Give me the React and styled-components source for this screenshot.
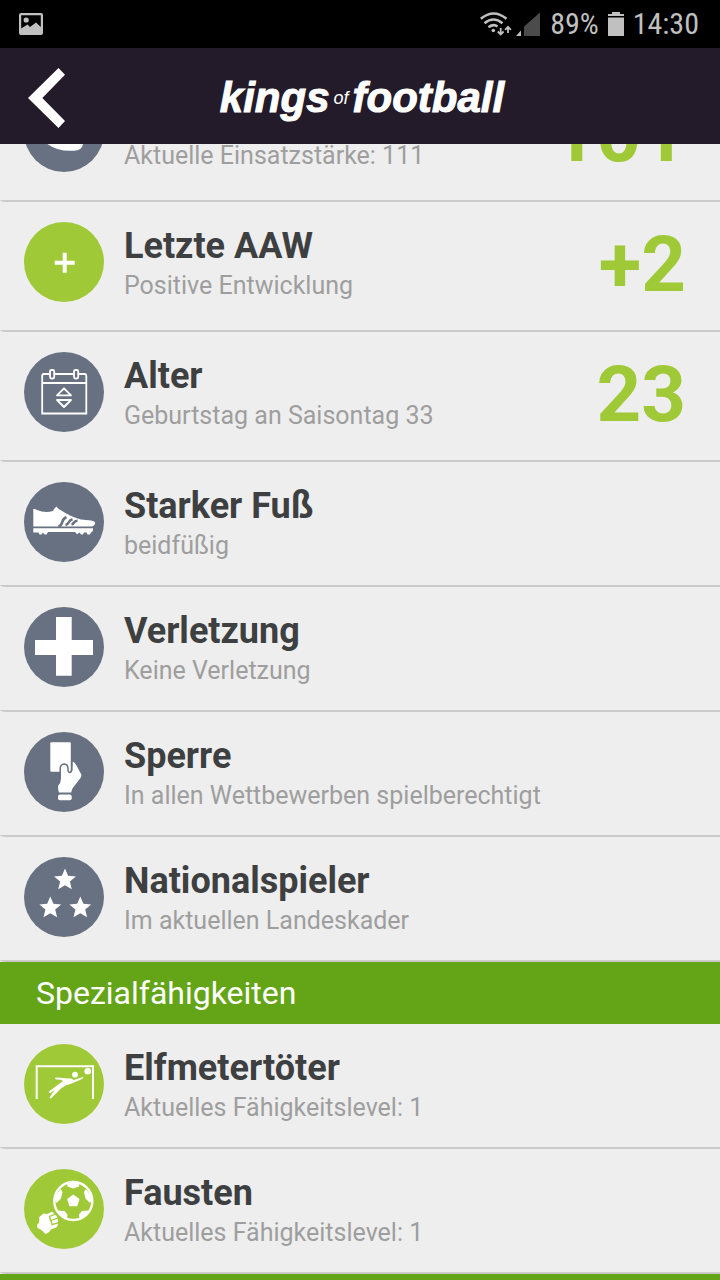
import React, { useLayoutEffect, useRef } from "react";
import styled, { createGlobalStyle } from "styled-components";

const lime = "#a0c938";
const slate = "#687182";

const GlobalStyle = createGlobalStyle`
  *, *::before, *::after { box-sizing: border-box; }
  html, body, #root { height: 100%; }
  body {
    margin: 0;
    background: #eeeeee;
    font-family: Roboto, "Liberation Sans", sans-serif;
  }
  svg { display: block; flex: none; }
`;

const Screen = styled.div`
  display: flex;
  flex-direction: column;
  height: 100%;
  overflow: hidden;
`;

const StatusBar = styled.div`
  display: flex;
  align-items: center;
  flex: none;
  height: 48px;
  padding: 0 21px 0 19px;
  background: #000000;
  color: #c0c0c0;
  font-family: "Roboto Condensed", Roboto, sans-serif;
  font-size: 30px;
  line-height: 50px;
`;

const StatusGroup = styled.div`
  display: flex;
  align-items: center;
  gap: 9px;
  margin-left: auto;
`;

const TopBar = styled.header`
  display: grid;
  grid-template-columns: 96px 1fr 96px;
  align-items: center;
  flex: none;
  height: 96px;
  background: #231b29;
`;

const BackButton = styled.button`
  display: flex;
  align-items: center;
  height: 96px;
  padding: 4px 0 0 28px;
  border: 0;
  background: none;
`;

const Logo = styled.h1`
  display: flex;
  justify-content: center;
  align-items: center;
  gap: 4px;
  margin: 0;
  padding: 4px 0 0 4px;
  color: #ffffff;
  font: italic bold 42px/48px "Liberation Sans", sans-serif;
  -webkit-text-stroke: 1px #ffffff;

  small {
    font-size: 18px;
    font-weight: 400;
    line-height: 48px;
    -webkit-text-stroke: 0;
  }
`;

const Scroller = styled.main`
  flex: 1;
  min-height: 0;
  overflow-y: auto;
  scrollbar-width: none;
`;

const List = styled.ul`
  margin: 0;
  padding: 0;
  list-style: none;
`;

const Row = styled.li`
  display: flex;
  align-items: flex-start;
  gap: 20px;
  height: ${({ $tall }) => ($tall ? 130 : 125)}px;
  padding: 20px 34px 0 24px;
  border-bottom: 2px solid #cacaca;
  border-bottom-left-radius: 8px 2px;
`;

const RowText = styled.div`
  flex: 1;
  min-width: 0;
`;

const RowTitle = styled.h2`
  min-height: 48px;
  margin: 0;
  color: #3d3f41;
  font-size: 36px;
  font-weight: 700;
  line-height: 48px;
`;

const RowNote = styled.p`
  margin: 0;
  color: #9e9e9e;
  font-size: 25px;
  font-weight: 400;
  line-height: 32px;
  white-space: nowrap;
`;

const RowValue = styled.strong`
  color: ${lime};
  font-size: 78px;
  font-weight: 700;
  line-height: 86px;
`;

const SectionBar = styled.h2`
  height: 62px;
  margin: 0;
  padding: 0 36px;
  background: #63a516;
  color: #ffffff;
  font-size: 32px;
  font-weight: 400;
  line-height: 62px;
`;

function Badge({ color = slate, children }) {
  return (
    <svg width="80" height="80" viewBox="0 0 80 80" fill="#fff" aria-hidden="true">
      <circle cx="40" cy="40" r="40" fill={color} />
      {children}
    </svg>
  );
}

const star = (cx, cy, outer, inner) =>
  Array.from({ length: 10 }, (_, i) => {
    const r = i % 2 ? inner : outer;
    const a = (i * Math.PI) / 5 - Math.PI / 2;
    return `${(cx + r * Math.cos(a)).toFixed(1)},${(cy + r * Math.sin(a)).toFixed(1)}`;
  }).join(" ");

const StrengthIcon = () => (
  <Badge>
    <path d="M20 30 Q30 18 44 30 Q60 34 59 52 Q58 58.500 50 58.700 Q32 60 21 50 Z" />
  </Badge>
);

const PlusIcon = () => (
  <Badge color={lime}>
    <path d="M38.700 30.700h4v8h8v4h-8v8h-4v-8h-8v-4h8z" />
  </Badge>
);

const CalendarIcon = () => (
  <Badge>
    <g fill="none" stroke="#fff" strokeWidth="1.800">
      <path d="M25.500 22H20Q18.200 22 18.200 24V61.500H62.300V24Q62.300 22 60.500 22H54.500M30.500 22H49.500M18.200 31H62.300" />
      <rect x="26" y="18" width="4.200" height="8.500" rx="1.500" />
      <rect x="50" y="18" width="4.200" height="8.500" rx="1.500" />
      <path d="M33 43.300L40 36.300L47 43.300ZM33 48L40 55L47 48Z" strokeLinejoin="round" />
    </g>
  </Badge>
);

const BootIcon = () => (
  <Badge>
    <path d="M9.300 27Q11 26.500 13 28Q21 31.500 29 29Q30.500 26 32.500 24.500Q34 27 36.500 28Q46 34.500 57 37.500L67 38.500Q72 39.500 71 42Q70 44.500 66 44.600H9.300Z" />
    <path d="M9.300 46.300H69Q69.500 50 67 50.300L66 52.500H63.500L62.500 50.500H60L59 52.500H57L55.500 50.500L53 52.300L51 50H24L22.500 52.500H20.500L19 50.500L17.500 52.500H15.500L14.500 50.500H9.300Z" />
    <path d="M34.500 44.600Q37.500 43.500 38.500 39.500Q39.300 36.300 42.500 35.300M41.500 43Q43.700 42.500 45 40Q46 37.800 48.500 37.200M47.500 42.500Q49.200 42 50.300 40.300Q51.500 38.800 53.500 38.800" fill="none" stroke={slate} strokeWidth="2.600" />
  </Badge>
);

const CrossIcon = () => (
  <Badge>
    <path d="M32 10h15.700v23H69v15H47.700v20.700H32V48H11V33h21z" />
  </Badge>
);

const CardIcon = () => (
  <Badge>
    <rect x="26.300" y="10.300" width="20.500" height="29.400" rx="1" />
    <path d="M48.700 29.500Q51 30.500 52.500 33.500L57.300 42.500Q57.500 44.500 56.500 46L49.500 55Q47.500 57 47.200 60.500H35Q33.500 56 34.200 53.500Q37.500 50 36.700 46V36Q37 32.800 40.200 32.300Q43.500 32.500 43.800 36V39Q44.500 41 46.500 40.800Q48.500 40 48.300 37.500Z" />
    <path d="M36.200 47V36Q36.500 32.300 40.200 31.900Q43.700 32.200 44 36V38.500Q44.300 40.600 46.200 40.400Q47.800 39.800 47.700 37.500V29" fill="none" stroke={slate} strokeWidth="1.500" />
    <rect x="34" y="62.500" width="13.700" height="5.800" rx="2" />
  </Badge>
);

const StarsIcon = () => (
  <Badge>
    <polygon points={star(41, 23, 11.5, 5.2)} />
    <polygon points={star(26.3, 51, 11.5, 5.2)} />
    <polygon points={star(56.3, 51, 11.5, 5.2)} />
  </Badge>
);

const SaveIcon = () => (
  <Badge color={lime}>
    <path d="M12.700 55V22.300H69V55" fill="none" stroke="#fff" strokeWidth="2" />
    <circle cx="63.700" cy="27.200" r="3.300" />
    <circle cx="51" cy="30.700" r="2.900" />
    <path d="M31.500 33.500Q37 33.500 41 34.200L47 34.500L50 36L59.500 32.800Q59.500 34.300 57 35.500L47 39.800Q41 41 37 44.500L27 54.500Q24.500 54 26.500 52L31 45.500L26.500 49Q24 49 25.500 47L33 41.500L39 37L37 35.700L32 35.500Q30.500 34.500 31.500 33.500Z" />
  </Badge>
);

const PunchIcon = () => (
  <Badge color={lime}>
    <circle cx="49.300" cy="32" r="19" fill="none" stroke="#fff" strokeWidth="2.400" />
    <path d="M49.300 25.500L55.500 30L53.200 37.200H45.400L43.100 30Z" />
    <path d="M43 14L55.500 14L55 17.500L49.300 19.500L43.500 17.500ZM31 27.500L36.500 20L38.500 23L37 29.500L32.500 34L31 31.500ZM67.600 27.500L62 20L60 23L61.500 29.500L66 34L67.600 31.500ZM36.500 46L34 41.500L40.500 42L43.500 45.500L43 49.500ZM62 46L64.500 41.500L58 42L55 45.500L55.500 49.500Z" />
    <path d="M13 56Q15.500 53.500 15.300 51V48L19.500 44.500L23.500 45L27.500 42.700Q30 43 30 45.500Q33.500 46.500 33.300 49.500Q34.800 52 33.700 54.300Q34.500 57.500 31.500 58.700L26.800 60.500Q26 63 21.500 65L18 61.500L13 58.500Z" />
    <path d="M30.500 45.500L25.500 47.500L26.500 51.500L34 49M27 51.800L28 55.700L34.500 53.700" fill="none" stroke={lime} strokeWidth="1.300" />
  </Badge>
);

const profile = [
  { icon: StrengthIcon, note: "Aktuelle Einsatzstärke: 111", value: "101", tall: true },
  { icon: PlusIcon, title: "Letzte AAW", note: "Positive Entwicklung", value: "+2", tall: true },
  { icon: CalendarIcon, title: "Alter", note: "Geburtstag an Saisontag 33", value: "23", tall: true },
  { icon: BootIcon, title: "Starker Fuß", note: "beidfüßig" },
  { icon: CrossIcon, title: "Verletzung", note: "Keine Verletzung" },
  { icon: CardIcon, title: "Sperre", note: "In allen Wettbewerben spielberechtigt" },
  { icon: StarsIcon, title: "Nationalspieler", note: "Im aktuellen Landeskader" },
];

const skills = [
  { icon: SaveIcon, title: "Elfmetertöter", note: "Aktuelles Fähigkeitslevel: 1" },
  { icon: PunchIcon, title: "Fausten", note: "Aktuelles Fähigkeitslevel: 1" },
];

function Rows({ items }) {
  return (
    <List>
      {items.map(({ icon: Icon, title, note, value, tall }) => (
        <Row key={title ?? note} $tall={tall}>
          <Icon />
          <RowText>
            <RowTitle as={title ? "h2" : "div"}>{title}</RowTitle>
            <RowNote>{note}</RowNote>
          </RowText>
          {value && <RowValue>{value}</RowValue>}
        </Row>
      ))}
    </List>
  );
}

export default function App() {
  const scroller = useRef(null);

  useLayoutEffect(() => {
    scroller.current.scrollTop = 72;
  }, []);

  return (
    <Screen>
      <GlobalStyle />
      <StatusBar>
        <svg width="24" height="22" viewBox="0 0 24 22" fill="#c0c0c0" aria-hidden="true">
          <path fillRule="evenodd" d="M2 0H22Q24 0 24 2V20Q24 22 22 22H2Q0 22 0 20V2Q0 0 2 0ZM2.200 2.200V15.500L8.500 11.500L11 14L17 9.500L21.800 14V2.200Z" />
          <circle cx="7.200" cy="7" r="2.600" />
        </svg>
        <StatusGroup>
          <svg width="61" height="26" viewBox="0 0 61 26" fill="none" stroke="#c0c0c0" strokeWidth="2.600" aria-hidden="true">
            <path d="M0.800 7.800Q13.500-2.800 26.500 7.800M4.500 12.200Q13.500 4.800 22.500 12.200M8.500 16.200Q13.500 12.500 17.500 15.500" />
            <circle cx="13.300" cy="19.500" r="1.800" fill="#c0c0c0" stroke="none" />
            <path d="M20.700 17V23M17.800 20.500L20.700 23.500L23.600 20.500M28 22V16.500M25.100 18.800L28 15.800L30.900 18.800" strokeWidth="1.800" />
            <path d="M36 25H41V19.500Z" fill="#c0c0c0" stroke="none" />
            <path d="M44 25V15.500L60 1.500V25Z" fill="#4b4b4b" stroke="none" />
          </svg>
          <span>89%</span>
          <svg width="16" height="24" viewBox="0 0 16 24" fill="#c0c0c0" aria-hidden="true">
            <path d="M4 0H12V2H16V4H0V2H4ZM0 5.500H16V24H0Z" />
          </svg>
          <span>14:30</span>
        </StatusGroup>
      </StatusBar>
      <TopBar>
        <BackButton type="button" aria-label="Zurück">
          <svg width="37" height="60" viewBox="0 0 37 60" fill="#fff" aria-hidden="true">
            <path d="M30.500 0L37 6.700L14.300 30L37 53L30.500 60L0 30Z" />
          </svg>
        </BackButton>
        <Logo>
          <span>kings</span>
          <small>of</small>
          <span>football</span>
        </Logo>
      </TopBar>
      <Scroller ref={scroller}>
        <Rows items={profile} />
        <SectionBar>Spezialfähigkeiten</SectionBar>
        <Rows items={skills} />
        <SectionBar as="div" />
      </Scroller>
    </Screen>
  );
}
